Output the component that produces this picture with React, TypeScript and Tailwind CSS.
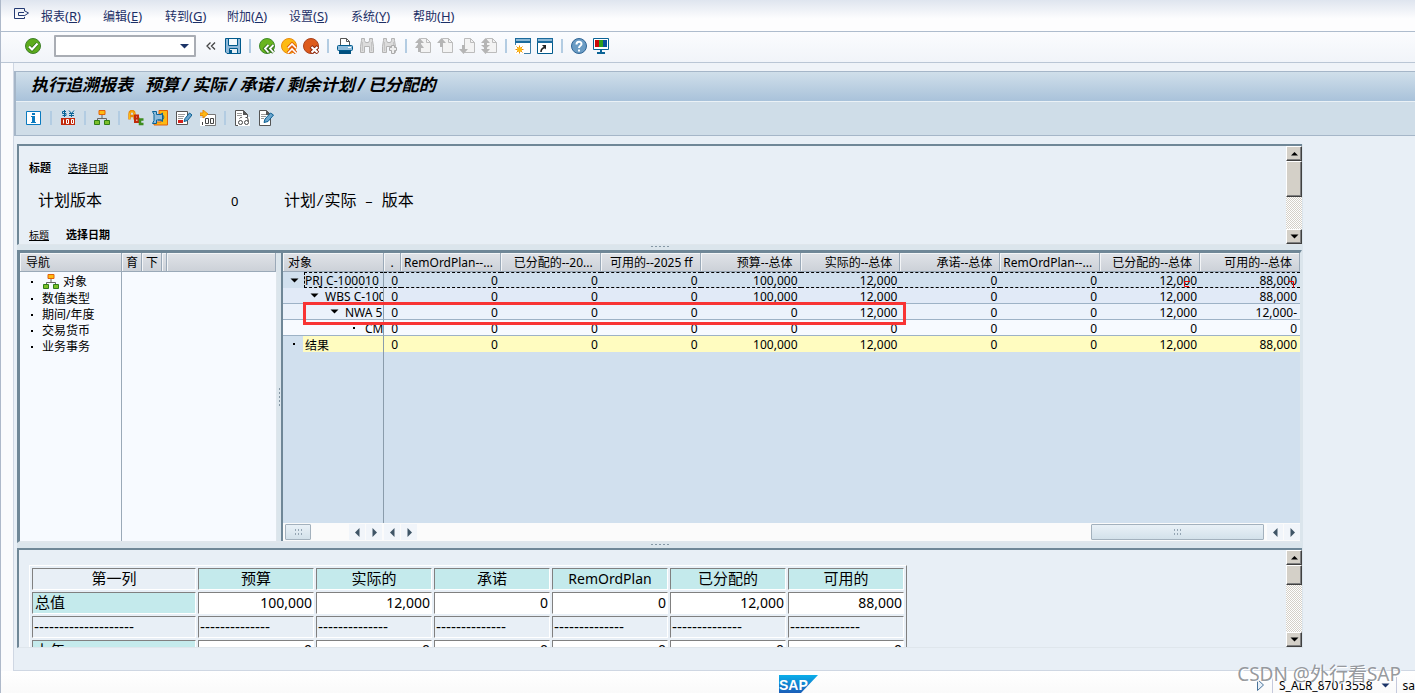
import type { ReactNode } from 'react';
import { clsx } from 'clsx';

const menus = [
  { label: '报表', key: 'R' },
  { label: '编辑', key: 'E' },
  { label: '转到', key: 'G' },
  { label: '附加', key: 'A' },
  { label: '设置', key: 'S' },
  { label: '系统', key: 'Y' },
  { label: '帮助', key: 'H' },
];

const navItems = ['数值类型', '期间/年度', '交易货币', '业务事务'];

const gridHeaders = [
  'RemOrdPlan--...',
  '已分配的--20...',
  '可用的--2025 ff',
  '预算--总体',
  '实际的--总体',
  '承诺--总体',
  'RemOrdPlan--...',
  '已分配的--总体',
  '可用的--总体',
];

interface GridRow {
  name: string;
  open: boolean;
  indent: string;
  color: string;
  values: string[];
}

const gridRows: GridRow[] = [
  {
    name: 'PRJ C-100010',
    open: true,
    indent: 'pl-[6px]',
    color: 'bg-[#d1e0ee]',
    values: ['0', '0', '0', '0', '100,000', '12,000', '0', '0', '12,000', '88,000'],
  },
  {
    name: 'WBS C-100',
    open: true,
    indent: 'pl-[26px]',
    color: 'bg-[#e1eaf7]',
    values: ['0', '0', '0', '0', '100,000', '12,000', '0', '0', '12,000', '88,000'],
  },
  {
    name: 'NWA 5',
    open: true,
    indent: 'pl-[46px]',
    color: 'bg-[#ebf2fb]',
    values: ['0', '0', '0', '0', '0', '12,000', '0', '0', '12,000', '12,000-'],
  },
  {
    name: 'CMI',
    open: false,
    indent: 'pl-[66px]',
    color: 'bg-[#f7faff]',
    values: ['0', '0', '0', '0', '0', '0', '0', '0', '0', '0'],
  },
];

const totalValues = ['0', '0', '0', '0', '100,000', '12,000', '0', '0', '12,000', '88,000'];

const detailColumns = ['预算', '实际的', '承诺', 'RemOrdPlan', '已分配的', '可用的'];
const detailTotals = ['100,000', '12,000', '0', '0', '12,000', '88,000'];

/* ---------- Ícones ---------- */

function Svg({ children }: { children: ReactNode }) {
  return (
    <svg width="16" height="16" viewBox="0 0 16 16" fill="none" className="block shrink-0" aria-hidden="true">
      {children}
    </svg>
  );
}

const ExitIcon = () => (
  <Svg>
    <path d="M11.500 4V1.500H1.500v10h10V10" stroke="#243a73" />
    <path d="M5.500 8.500v-3H11M5.500 8.500H11" stroke="#243a73" />
    <path d="M11 3.500l4.500 2.500-4.500 3" stroke="#243a73" />
  </Svg>
);

const CheckIcon = () => (
  <Svg>
    <circle cx="8" cy="8" r="7.500" fill="#5cab1c" stroke="#3f7f2a" />
    <path d="M4 8.500l3 3 5.500-6" stroke="#2d6e12" strokeWidth="3.600" />
    <path d="M4 8.500l3 3 5.500-6" stroke="#fff" strokeWidth="2.200" />
  </Svg>
);

const SaveIcon = () => (
  <Svg>
    <path d="M.5.5h15v15H2L.5 14z" fill="#8fb8d8" stroke="#005a8c" />
    <path d="M3.500 1v6.500h9V1" fill="#f4f9fc" stroke="#005a8c" />
    <path d="M4.500 15v-4.500h8V15" fill="#e8f0f5" stroke="#005a8c" />
    <path d="M5 12h2v3H5z" fill="#005a8c" />
  </Svg>
);

const BackIcon = () => (
  <Svg>
    <circle cx="8" cy="8" r="7.500" fill="#69b51e" stroke="#3f8a2a" />
    <path d="M9.500 7L6 10.500l3.500 4M14.500 7L11 10.500l3.500 4" stroke="#35701e" strokeWidth="3.600" />
    <path d="M9.500 7L6 10.500l3.500 4M14.500 7L11 10.500l3.500 4" stroke="#fff" strokeWidth="1.800" />
  </Svg>
);

const UpIcon = () => (
  <Svg>
    <circle cx="8" cy="8" r="7.500" fill="#fdbb13" stroke="#e98a0c" />
    <path d="M7 10l4-4 4 4M7 15l4-4 4 4" stroke="#e2600a" strokeWidth="3.600" />
    <path d="M7 10l4-4 4 4M7 15l4-4 4 4" stroke="#fff" strokeWidth="1.600" />
  </Svg>
);

const CancelIcon = () => (
  <Svg>
    <circle cx="8" cy="8" r="7.500" fill="#dd5a1b" stroke="#a8411b" />
    <path d="M8 8.500l7 6.500M15 8.500L8 15" stroke="#8f2a10" strokeWidth="4" />
    <path d="M8.500 9l6 5.500M14.500 9l-6 5.500" stroke="#fff" strokeWidth="2.200" />
  </Svg>
);

const PrintIcon = () => (
  <Svg>
    <path d="M3.500 7V.5h6l3 3V7" fill="#fff" stroke="#555" />
    <path d="M9.500.5v3h3" stroke="#555" />
    <rect x=".5" y="7.500" width="15" height="5" rx="1" fill="#8fbcdb" stroke="#005a8c" />
    <path d="M2 13h12v3H2z" fill="#00507f" />
    <path d="M11 9.500h3" stroke="#fff" />
  </Svg>
);

const FindIcon = ({ next = false }: { next?: boolean }) => (
  <Svg>
    <path
      d="M2.500 2.500v-2h3v2l1 2h3l1-2v-2h3v2l1 6v6h-4v-6h-5v6h-4v-6z"
      fill="#dcdcdc"
      stroke="#b4b4b4"
    />
    <path d="M3.500 4v9M12.500 4v9" stroke="#c4c4c4" />
    {next && <path d="M10.500 7.500h3v2h2v3h-2v3h-3v-3h-2v-3h2z" fill="#eee" stroke="#aaa" />}
  </Svg>
);

const PageIcon = ({ variant }: { variant: 'first' | 'prev' | 'next' | 'last' }) => (
  <Svg>
    <path d="M5.500.5h6l4 4v10h-10z" fill="#f3f3f3" stroke="#bcbcbc" />
    <path d="M11.500.5v4h4" stroke="#bcbcbc" />
    {variant === 'first' && <path d="M4.500 0L9 5H6v1l3 4H6v4H3v-4H0l3-4V5H0z" fill="#b5b5b5" />}
    {variant === 'prev' && <path d="M4.500 0L9 5H6v4H3V5H0z" fill="#b5b5b5" />}
    {variant === 'next' && <path d="M4.500 16L0 11h3V7h3v4h3z" fill="#b5b5b5" />}
    {variant === 'last' && <path d="M4.500 16L0 11h3V9h3v2h3zM4.500 0L9 5H6v2h3l-4.500 4L0 7h3V5H0z" fill="#b5b5b5" />}
  </Svg>
);

const SessionIcon = () => (
  <Svg>
    <path d="M.5.5h15v15H.5z" fill="#fff" stroke="#3c7da8" />
    <path d="M0 0h16v5H0z" fill="#1b6a9c" />
    <path d="M1 2h14" stroke="#8db9d6" strokeWidth="2" />
    <path d="M0 7h9v9H0z" fill="#fff" />
    <path d="M4.500 7.500v8M.5 11.500h8M1.500 8.500l6 6M7.500 8.500l-6 6" stroke="#e98a0c" />
    <circle cx="4.500" cy="11.500" r="2.500" fill="#fdb913" />
  </Svg>
);

const ShortcutIcon = () => (
  <Svg>
    <path d="M.5.5h15v15H.5z" fill="#fff" stroke="#005a8c" />
    <path d="M0 0h16v5H0z" fill="#1b6a9c" />
    <path d="M1 2h14" stroke="#8db9d6" strokeWidth="2" />
    <path d="M4 14c0-3 1-4 4-4.500" stroke="#222" strokeWidth="1.600" />
    <path d="M5 7h4v4.500z" fill="#222" />
  </Svg>
);

const HelpIcon = () => (
  <Svg>
    <circle cx="8" cy="8" r="7.500" fill="#6b9cc4" stroke="#2f6595" />
    <path d="M5.500 6.500c0-3.500 5-3.500 5-.5 0 2-2.500 1.500-2.500 4" stroke="#fff" strokeWidth="2" />
    <path d="M7 11.500h2v2H7z" fill="#fff" />
  </Svg>
);

const MonitorIcon = () => (
  <Svg>
    <path d="M.5.500h15v11H.5z" fill="#fff" stroke="#0a6396" />
    <path d="M2 2h4v7H2z" fill="#cc0a0a" />
    <path d="M6 2h4v7H6z" fill="#2f9e1e" />
    <path d="M10 2h4v7h-4z" fill="#0a4f9c" />
    <path d="M7 12h2v2h3v2H4v-2h3z" fill="#0a6396" />
  </Svg>
);

const InfoIcon = () => (
  <Svg>
    <path d="M.5 1.500h14v13H.5z" fill="#fff" stroke="#0a7abf" />
    <path d="M6 3h3v2H6zM5 6h4v6h1v1H5v-1h1V7H5z" fill="#0a7abf" />
  </Svg>
);

const CurrencyIcon = () => (
  <Svg>
    <path d="M6 1.500H2.500v2H6v2H2.500M4.500 0v7" stroke="#0a6396" />
    <path d="M9 .5l2.500 3 2.500-3M11.500 3v4M9 3.500h5M9 5.500h5" stroke="#0a6396" />
    <rect x="1" y="8" width="14" height="7" fill="#c22a0c" />
    <path d="M3.500 9.500v4M6.500 9.500h2v4h-2zM11.500 9.500h2v4h-2z" stroke="#fff" />
  </Svg>
);

const HierarchyIcon = () => (
  <Svg>
    <path d="M8 5v3M3.500 11V8.500h9V11" stroke="#666" />
    <path d="M5 .5h6v4H5z" fill="#fdbb13" stroke="#e2600a" />
    <path d="M.5 10.500h5v4h-5zM10.500 10.500h5v4h-5z" fill="#7cbf2a" stroke="#2f7d16" />
  </Svg>
);

const AbcIcon = () => (
  <Svg>
    <path d="M1.500 9.500V4c0-4 5-4 5 0v5.500M1.500 6h5" stroke="#e98a0c" strokeWidth="2.500" />
    <path d="M1.500 9V4c0-3 5-3 5 0v5" stroke="#fdbb13" />
    <path d="M7 5.500h3v3H7h3.500v3.500H7z" fill="#e8b0a0" stroke="#c22a0c" strokeWidth="2" />
    <path d="M15.500 9.500H12V14h3.500" stroke="#3e8c1e" strokeWidth="2.500" />
  </Svg>
);

const MapIcon = () => (
  <Svg>
    <path d="M7 .5h8.500v14.500H2v-3h7V4H7z" fill="#fdb913" stroke="#e2600a" />
    <path d="M.5 1.500h4v3h4l2-1.500v8.500L8.500 10h-4v3.500h-4l1.500-3V4.500z" fill="#8fbcdb" stroke="#0a6396" />
    <path d="M6 4.500h3.500c3 0 3 5.500 0 5.500H6" stroke="#0a6396" />
  </Svg>
);

const EditLineIcon = () => (
  <Svg>
    <path d="M.5 1.500h11v13H.5z" fill="#fff" stroke="#555" />
    <path d="M2 4.500h7M2 6.500h6M2 8.500h5" stroke="#999" />
    <path d="M2 10h5v3H2z" fill="#d3201a" />
    <path d="M8 11.500l1-3L13.500 3l2.500 2-4.500 5.500z" fill="#6ba5cd" stroke="#0a5f92" />
  </Svg>
);

const DecimalIcon = () => (
  <Svg>
    <path d="M4 4.500h11.500V15.500H4z" fill="#fff" stroke="#777" />
    <path d="M0 8h5v8H0z" fill="#fff" />
    <path d="M0 3h3V0l5 4-5 4V5.500H0z" fill="#fdb913" stroke="#e98a0c" />
    <path d="M2.500 12v3M5.500 8.500h3v5h-3zM10.500 8.500h3v5h-3z" stroke="#444" />
  </Svg>
);

const DisplayDocIcon = () => (
  <Svg>
    <path d="M1.500.5h8l4 4v11h-12z" fill="#fff" stroke="#555" />
    <path d="M9 0v5h5z" fill="#555" />
    <path d="M3 3.500h5M3 5.500h5" stroke="#999" />
    <path d="M4 7h12v9H4z" fill="#fff" />
    <path d="M5.500 8.500c2-2 2-1 2.500-.5M11.500 7.500h2l1 4" stroke="#444" />
    <circle cx="6.500" cy="12.500" r="2" stroke="#444" />
    <circle cx="12.500" cy="12.500" r="2" stroke="#444" />
  </Svg>
);

const ChangeDocIcon = () => (
  <Svg>
    <path d="M1.500.5h7l4 4v11h-11z" fill="#fff" stroke="#555" />
    <path d="M8 0v5h5z" fill="#555" />
    <path d="M3 4.500h5M3 6.500h5M3 8.500h3" stroke="#999" />
    <path d="M6 12.500l1-3.500 5.500-6 3 2L10 11.500z" fill="#6ba5cd" stroke="#0a5f92" />
  </Svg>
);

const SapLogo = () => (
  <svg width="40" height="18" viewBox="0 0 40 18" className="block" role="img" aria-label="SAP">
    <defs>
      <linearGradient id="sap" x1="0" y1="0" x2="0" y2="1">
        <stop offset="0" stopColor="#0aaeea" />
        <stop offset="1" stopColor="#1a5db8" />
      </linearGradient>
    </defs>
    <path d="M0 0h39L22 18H0z" fill="url(#sap)" />
    <text x="0" y="15" fontFamily="Liberation Sans, sans-serif" fontWeight="700" fontSize="14" fill="#fff">
      SAP
    </text>
  </svg>
);

const Arrow = ({ dir, color = '#3f5566' }: { dir: 'up' | 'down' | 'left' | 'right'; color?: string }) => (
  <svg width="9" height="9" viewBox="0 0 9 9" className="block shrink-0" aria-hidden="true">
    {dir === 'up' && <path d="M1 6.500h7L4.500 3z" fill={color} />}
    {dir === 'down' && <path d="M.5 2.500h8L4.500 6.500z" fill={color} />}
    {dir === 'left' && <path d="M6.500 0v9L2 4.500z" fill={color} />}
    {dir === 'right' && <path d="M2.500 0v9L7 4.500z" fill={color} />}
  </svg>
);

/* ---------- Componentes ---------- */

function IconButton({ label, children }: { label: string; children: ReactNode }) {
  return (
    <button type="button" aria-label={label} className="block size-4 shrink-0">
      {children}
    </button>
  );
}

const separator = 'h-[14px] w-[2px] bg-[#b3cce2]';

const raised =
  'border border-t-white border-l-white border-r-[#404040] border-b-[#404040] bg-[#d4d0c8] shadow-[inset_-1px_-1px_0_#808080]';

function VScroll({ thumb }: { thumb: string }) {
  return (
    <div className="flex w-4 shrink-0 flex-col bg-[repeating-conic-gradient(#ffffff_0_25%,#d4d0c8_0_50%)] bg-[length:2px_2px]">
      <button type="button" aria-label="向上滚动" className={clsx('flex h-[15px] items-center justify-center', raised)}>
        <Arrow dir="up" color="#000" />
      </button>
      <div className={clsx(thumb, raised)} />
      <button type="button" aria-label="向下滚动" className={clsx('mt-auto flex h-[15px] items-center justify-center', raised)}>
        <Arrow dir="down" color="#000" />
      </button>
    </div>
  );
}

function ScrollArrows() {
  return (
    <div className="flex shrink-0 gap-px">
      <button type="button" aria-label="向左滚动" className="flex h-4 w-4 items-center justify-center bg-[#f1f5fa]">
        <Arrow dir="left" />
      </button>
      <button type="button" aria-label="向右滚动" className="flex h-4 w-4 items-center justify-center bg-[#f1f5fa]">
        <Arrow dir="right" />
      </button>
    </div>
  );
}

function Thumb({ width }: { width: string }) {
  return (
    <div
      className={clsx(
        'flex h-4 shrink-0 items-center justify-center rounded-[1px] border border-[#a3b1bd] bg-linear-to-b from-[#e9f1f7] to-[#d3e1ea]',
        width
      )}
    >
      <div className="grid grid-cols-3 gap-[2px]">
        {[0, 1, 2, 3, 4, 5].map((i) => (
          <span key={i} className="h-[2px] w-px bg-[#94a5b3]" />
        ))}
      </div>
    </div>
  );
}

function Splitter() {
  return (
    <div className="flex h-[5px] shrink-0 justify-center gap-[2px] bg-[#dbe5ec] pt-px">
      {[0, 1, 2, 3, 4].map((i) => (
        <span key={i} className="h-px w-[2px] bg-[#8597a5]" />
      ))}
    </div>
  );
}

const Bullet = () => <span className="size-[2px] shrink-0 bg-black" />;

const headCell =
  'h-[19px] overflow-hidden border-r border-b border-[#9aa9b8] bg-linear-to-b from-[#e0e3e8] to-[#ccd1d8] p-0 font-normal whitespace-nowrap shadow-[inset_1px_1px_0_#f3f5f7]';

const sunken = 'h-[22px] border border-t-[#808080] border-l-[#808080] border-r-white border-b-white p-0';

const panel =
  'flex shrink-0 border-t-2 border-b border-l-2 border-t-[#6f8797] border-b-[#dfe6ec] border-l-[#6f8797]';

function MenuBar() {
  return (
    <nav className="flex h-8 shrink-0 items-center border-b border-[#aebccd] bg-linear-to-b from-[#dfe5ef] to-[#fdfdfe] to-60% pl-3 text-[#1c2f66]">
      <button type="button" aria-label="退出" className="mr-3 mb-[2px] block size-4 shrink-0">
        <ExitIcon />
      </button>
      {menus.map((m) => (
        <button key={m.key} type="button" className="flex w-[62px] shrink-0 items-center pt-[3px] text-[12px] whitespace-nowrap">
          {m.label}
          <span className="text-[13px]">
            (<u>{m.key}</u>)
          </span>
        </button>
      ))}
    </nav>
  );
}

function Toolbar() {
  return (
    <div className="flex h-[31px] shrink-0 items-center gap-[6px] border-b border-[#bac6d5] bg-linear-to-b from-[#fbfcfe] to-[#f1f4f9] pb-[2px] pl-6">
      <IconButton label="回车"><CheckIcon /></IconButton>
      <div className="relative mx-[7px]">
        <input
          aria-label="命令"
          className="block h-[22px] w-[142px] rounded-[1px] border-2 border-[#a9adb4] bg-white px-1 text-[12px] outline-none"
        />
        <button type="button" aria-label="历史记录" className="absolute top-[6px] right-[7px]">
          <svg width="9" height="9" viewBox="0 0 9 9" aria-hidden="true">
            <path d="M0 3h9L4.500 7.500z" fill="#1c3468" />
          </svg>
        </button>
      </div>
      <button type="button" aria-label="收起" className="mr-[3px] ml-[-4px] flex h-4 w-[11px] items-center justify-center">
        <svg width="10" height="8" viewBox="0 0 10 8" fill="none" aria-hidden="true">
          <path d="M4.500 .5L1 4l3.500 3.500M9 .5L5.500 4 9 7.500" stroke="#444" strokeWidth="1.300" />
        </svg>
      </button>
      <IconButton label="保存"><SaveIcon /></IconButton>
      <span className={clsx('mx-[2px]', separator)} />
      <IconButton label="返回"><BackIcon /></IconButton>
      <IconButton label="退出"><UpIcon /></IconButton>
      <IconButton label="取消"><CancelIcon /></IconButton>
      <span className={clsx('mx-[2px]', separator)} />
      <IconButton label="打印"><PrintIcon /></IconButton>
      <IconButton label="查找"><FindIcon /></IconButton>
      <IconButton label="查找下一个"><FindIcon next /></IconButton>
      <span className={clsx('mx-[2px]', separator)} />
      <IconButton label="第一页"><PageIcon variant="first" /></IconButton>
      <IconButton label="上一页"><PageIcon variant="prev" /></IconButton>
      <IconButton label="下一页"><PageIcon variant="next" /></IconButton>
      <IconButton label="最后一页"><PageIcon variant="last" /></IconButton>
      <span className={clsx('mx-[2px]', separator)} />
      <IconButton label="新建会话"><SessionIcon /></IconButton>
      <IconButton label="创建快捷方式"><ShortcutIcon /></IconButton>
      <span className={clsx('mx-[2px]', separator)} />
      <IconButton label="帮助"><HelpIcon /></IconButton>
      <IconButton label="定制布局"><MonitorIcon /></IconButton>
    </div>
  );
}

function AppToolbar() {
  return (
    <div className="flex h-[34px] items-center gap-2 border-b border-[#a5b6c8] bg-[#cfdde8] pb-[2px] pl-[10px]">
      <IconButton label="信息"><InfoIcon /></IconButton>
      <span className={separator} />
      <IconButton label="货币"><CurrencyIcon /></IconButton>
      <span className={separator} />
      <IconButton label="层次"><HierarchyIcon /></IconButton>
      <span className={separator} />
      <IconButton label="文本"><AbcIcon /></IconButton>
      <IconButton label="导航"><MapIcon /></IconButton>
      <IconButton label="编辑行"><EditLineIcon /></IconButton>
      <IconButton label="小数位"><DecimalIcon /></IconButton>
      <span className={separator} />
      <IconButton label="显示凭证"><DisplayDocIcon /></IconButton>
      <IconButton label="更改凭证"><ChangeDocIcon /></IconButton>
    </div>
  );
}

function HeaderPanel() {
  return (
    <section className={clsx(panel, 'h-[101px]')}>
      <div className="flex-1 overflow-hidden pt-[14px] pl-[10px]">
        <div className="flex h-4 items-center gap-[17px] text-[11px]">
          <b>标题</b>
          <a href="#date" className="text-[10px] underline">选择日期</a>
        </div>
        <div className="mt-4 flex h-4 items-baseline pl-[9px] text-[16px] leading-4 whitespace-pre">
          <span className="w-[193px]">计划版本</span>
          <span className="w-[53px] text-[13px]">0</span>
          <span>计划</span>
          <span className="font-[Liberation_Mono] text-[14px]">/</span>
          <span>实际</span>
          <span className="font-[Liberation_Mono] text-[14px]"> – </span>
          <span>版本</span>
        </div>
        <div className="mt-[19px] flex h-4 items-center gap-[17px] text-[11px]">
          <a href="#title" className="text-[10px] underline">标题</a>
          <b>选择日期</b>
        </div>
      </div>
      <VScroll thumb="h-9" />
    </section>
  );
}

function NavPanel() {
  return (
    <div className="flex w-[257px] shrink-0 flex-col border-r border-[#dfe6ec] bg-[#f7faff] text-[12px]">
      <div className="flex leading-[20px]">
        <div className={clsx(headCell, 'w-[102px] pl-[6px]')}>导航</div>
        <div className={clsx(headCell, 'w-5 pl-1')}>育</div>
        <div className={clsx(headCell, 'w-5 pl-1')}>下</div>
        <div className={clsx(headCell, 'w-[5px]')} />
        <div className={clsx(headCell, 'flex-1')} />
      </div>
      <ul className="w-[102px] flex-1 border-r border-[#9aa9b8]">
        <li className="flex h-[19px] items-center gap-[10px] pl-[11px]">
          <Bullet />
          <span className="flex items-center gap-1">
            <HierarchyIcon />
            对象
          </span>
        </li>
        {navItems.map((item) => (
          <li key={item} className="flex h-4 items-center gap-[9px] pl-[11px] leading-4">
            <Bullet />
            {item}
          </li>
        ))}
      </ul>
    </div>
  );
}

function GridPanel() {
  return (
    <div className="relative flex min-w-0 flex-1 flex-col border-l-2 border-[#6f8797] bg-[#d1e0ee] text-[12px]">
      <table className="w-full table-fixed border-separate border-spacing-0 leading-[13px]">
        <colgroup>
          <col className="w-[101px]" />
          <col className="w-[17px]" />
          {gridHeaders.map((_, i) => (
            <col key={i} />
          ))}
        </colgroup>
        <thead>
          <tr className="leading-4">
            <th className={clsx(headCell, 'pt-px pl-[5px] text-left')}>对象</th>
            <th className={clsx(headCell, 'pt-px text-center')}>.</th>
            {gridHeaders.map((h, i) => (
              <th key={i} className={clsx(headCell, 'pt-px pr-[7px] text-right')}>{h}</th>
            ))}
          </tr>
        </thead>
        <tbody>
          {gridRows.map((row, r) => {
            const selected = r === 0;
            return (
              <tr key={row.name} className={row.color}>
                <td
                  className={clsx(
                    'h-4 overflow-hidden border-r border-r-[#8a9cab] p-0 whitespace-nowrap',
                    !selected && 'border-b border-b-[#9db2c6]',
                    row.indent
                  )}
                >
                  <div className="flex items-center">
                    <span className="flex w-[15px] shrink-0 items-center pl-[1px]">
                      {row.open ? <Arrow dir="down" color="#000" /> : <span className="ml-[3px] flex"><Bullet /></span>}
                    </span>
                    <span
                      className={clsx(
                        'flex-1 overflow-hidden',
                        selected ? 'h-4 border-y border-l border-dashed border-black pt-px' : 'h-[15px] pt-[2px] pl-px'
                      )}
                    >
                      {row.name}
                    </span>
                  </div>
                </td>
                {row.values.map((v, i) => (
                  <td
                    key={i}
                    className={clsx(
                      'h-4 p-0 pr-[3px] text-right',
                      selected ? 'border-y border-dashed border-black pt-px' : 'border-b border-[#9db2c6] pt-[2px]'
                    )}
                  >
                    {v}
                  </td>
                ))}
              </tr>
            );
          })}
          <tr className="bg-[#fffcc0]">
            <td className="h-4 border-r border-[#8a9cab] bg-[#d1e0ee] p-0">
              <div className="flex items-center">
                <span className="flex w-5 shrink-0 pl-[10px]"><Bullet /></span>
                <span className="h-4 flex-1 bg-[#fffcc0] pt-[3px] pl-[2px]">结果</span>
              </div>
            </td>
            {totalValues.map((v, i) => (
              <td key={i} className="h-4 p-0 pt-px pr-[3px] text-right">{v}</td>
            ))}
          </tr>
        </tbody>
      </table>
      <div className="w-[101px] flex-1 border-r border-[#8a9cab]" />
      <div className="flex h-[18px] shrink-0 items-center bg-[#fbfbfb]">
        <div className="flex w-[101px] shrink-0 items-center justify-between pr-[2px] pl-[2px]">
          <Thumb width="w-[26px]" />
          <ScrollArrows />
        </div>
        <div className="flex flex-1 items-center">
          <ScrollArrows />
          <div className="flex-1" />
          <Thumb width="w-[173px]" />
          <div className="w-[3px]" />
          <ScrollArrows />
        </div>
      </div>
      {/* Destaque da linha NWA */}
      <div className="pointer-events-none absolute top-[49px] left-[20px] h-[23px] w-[603px] border-[3px] border-[#f83434]" />
      {/* Marcas de seleção */}
      <svg className="pointer-events-none absolute top-[27px] right-[110px]" width="8" height="8" fill="none" aria-hidden="true">
        <path d="M8 1.500H2.500v5H7" stroke="#e00" />
      </svg>
      <svg className="pointer-events-none absolute top-[27px] right-[5px]" width="8" height="8" fill="none" aria-hidden="true">
        <path d="M1 1.500h5.500v6" stroke="#e00" />
      </svg>
    </div>
  );
}

function DetailPanel() {
  return (
    <section className={clsx(panel, 'h-[100px]')}>
      <div className="flex-1 overflow-hidden pt-[15px] pl-[10px]">
        <table className="w-[878px] table-fixed border-separate border-spacing-[2px] border border-t-white border-r-[#808080] border-b-[#808080] border-l-white text-[15px] leading-[18px]">
          <colgroup>
            <col className="w-[164px]" />
            {detailColumns.map((c) => (
              <col key={c} />
            ))}
          </colgroup>
          <thead>
            <tr>
              <th className={clsx(sunken, 'align-top font-normal')}>第一列</th>
              {detailColumns.map((c) => (
                <th
                  key={c}
                  className={clsx(
                    sunken,
                    'bg-[#c4eaec] font-normal',
                    c === 'RemOrdPlan' ? 'align-middle text-[14px]' : 'align-top'
                  )}
                >
                  {c}
                </th>
              ))}
            </tr>
          </thead>
          <tbody>
            <tr>
              <td className={clsx(sunken, 'bg-[#c4eaec] pl-[2px] align-top')}>总值</td>
              {detailTotals.map((v, i) => (
                <td key={i} className={clsx(sunken, 'bg-white pr-px text-right text-[14px]')}>{v}</td>
              ))}
            </tr>
            <tr className="font-[Liberation_Sans]">
              <td className={clsx(sunken, 'pl-px')}>--------------------</td>
              {detailColumns.map((c) => (
                <td key={c} className={clsx(sunken, 'pl-px')}>--------------</td>
              ))}
            </tr>
            <tr>
              <td className={clsx(sunken, 'bg-[#c4eaec] pl-[2px] align-top')}>上年</td>
              {detailColumns.map((c) => (
                <td key={c} className={clsx(sunken, 'bg-white pr-px text-right align-top text-[14px]')}>0</td>
              ))}
            </tr>
          </tbody>
        </table>
      </div>
      <VScroll thumb="h-5" />
    </section>
  );
}

function StatusBar() {
  return (
    <footer className="flex h-[22px] shrink-0 items-end justify-end overflow-hidden bg-linear-to-b from-white to-[#fafafa] text-[12px]">
      <div className="flex flex-1 justify-center pl-[344px]">
        <SapLogo />
      </div>
      <div className="flex h-4 w-[162px] shrink-0 items-center whitespace-nowrap">
        <svg width="18" height="12" viewBox="0 0 18 12" fill="none" className="mr-px shrink-0" aria-hidden="true">
          <path d="M4.500 .5v11L10.500 6z" fill="#e8f0f8" stroke="#4a7399" />
        </svg>
        <span className="mr-[6px] h-4 w-px shrink-0 bg-[#c5c9dc]" />
        <button type="button" className="flex shrink-0 items-center gap-2 pt-px">
          S_ALR_87013558
          <Arrow dir="down" color="#1c3468" />
        </button>
        <span className="mx-[6px] h-4 w-px shrink-0 bg-[#c5c9dc]" />
        <span className="shrink-0 pt-px">sa</span>
      </div>
    </footer>
  );
}

export default function App() {
  return (
    <div className="relative flex h-screen min-h-[640px] flex-col overflow-hidden border-l border-[#aeb9ca] bg-[#fdfdfe] font-['Noto_Sans','Noto_Sans_CJK_SC',sans-serif] text-black">
      <MenuBar />
      <Toolbar />
      <div className="flex min-h-0 flex-1 flex-col bg-linear-to-r from-[#fafbfd] to-white">
        <main className="ml-3 flex min-h-0 flex-1 flex-col border-b border-l border-[#cfd7e3] bg-[#e8eff6]">
          <div className="h-2 shrink-0 bg-[#eff3f8]" />
          <header className="shrink-0 border-t border-l-2 border-[#a5b6c8]">
            <h1 className="flex h-[30px] items-center border-b border-[#eaf1f6] bg-linear-to-b from-[#d0dfea] to-[#a9c2da] pb-[3px] pl-[15px] text-[17px] font-bold whitespace-pre italic">
              执行追溯报表
              <span className="pl-3">预算</span>
              <span className="px-[3px]">/</span>实际
              <span className="px-[3px]">/</span>承诺
              <span className="px-[3px]">/</span>剩余计划
              <span className="px-[3px]">/</span>已分配的
            </h1>
            <AppToolbar />
          </header>
          <div className="mt-2 mr-[112px] mb-[22px] ml-[3px] flex min-h-0 flex-1 flex-col border-r border-[#dbe5ec]">
            <HeaderPanel />
            <Splitter />
            <section className="flex min-h-0 flex-1 border-t-[3px] border-r-2 border-b-2 border-l-[3px] border-t-[#6f8797] border-r-[#dbe5ec] border-b-[#dfe6ec] border-l-[#6f8797]">
              <NavPanel />
              <div className="flex w-1 shrink-0 flex-col items-center justify-center gap-[2px] bg-[#dbe5ec]">
                {[0, 1, 2, 3, 4].map((i) => (
                  <span key={i} className="h-[2px] w-px bg-[#8597a5]" />
                ))}
              </div>
              <GridPanel />
            </section>
            <Splitter />
            <DetailPanel />
          </div>
        </main>
        <StatusBar />
      </div>
      <div className="pointer-events-none absolute right-[14px] bottom-[7px] text-[19px] leading-6 whitespace-nowrap text-[#8a8d92]/90 [text-shadow:1px_1px_0_#fff]">
        CSDN @外行看SAP
      </div>
    </div>
  );
}
